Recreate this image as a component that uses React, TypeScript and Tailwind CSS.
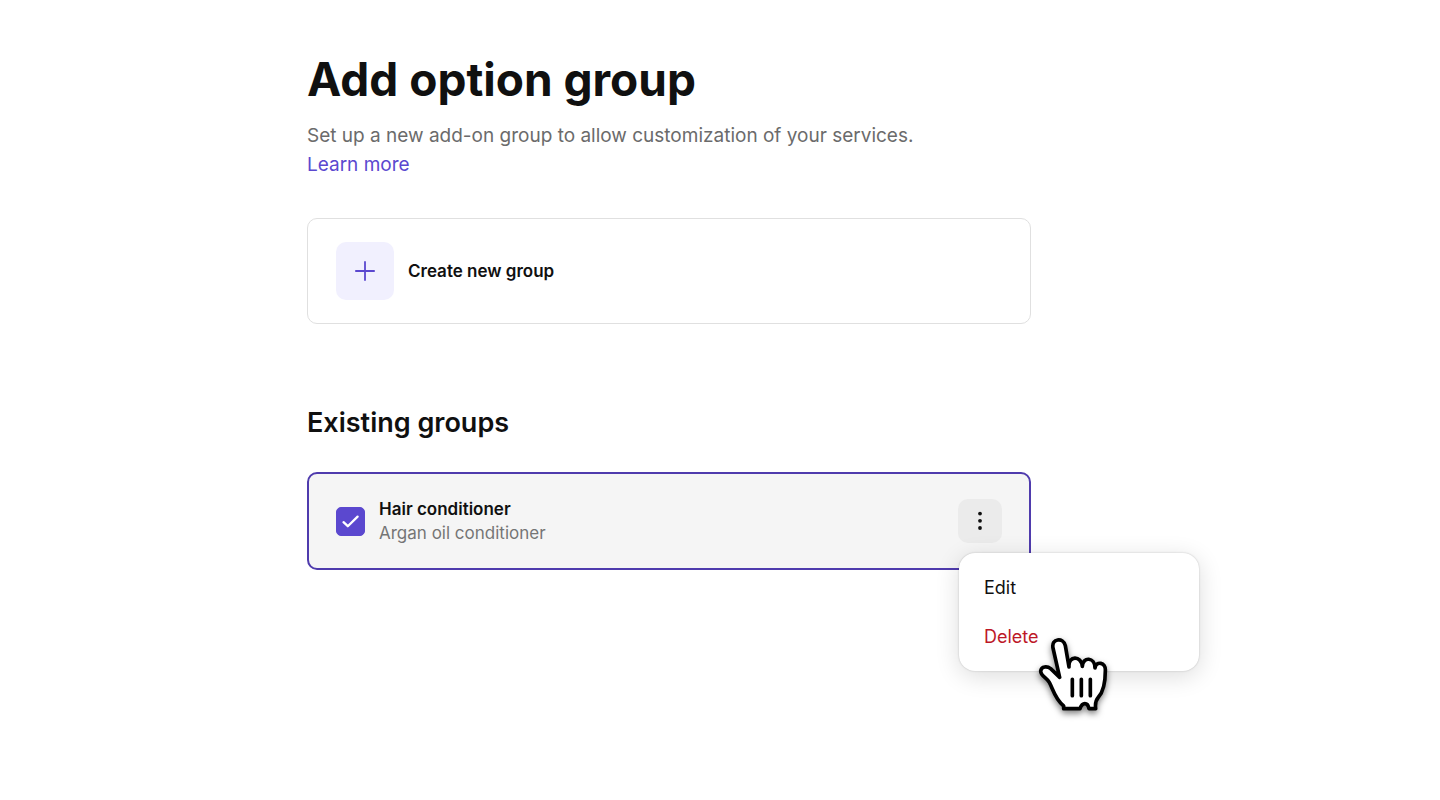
import { useState } from "react";

function PlusIcon() {
  return (
    <svg viewBox="0 0 20 20" className="size-5" fill="none" stroke="currentColor" strokeWidth="1.8" strokeLinecap="round" aria-hidden="true">
      <path d="M10 .9v18.2M.9 10h18.2" />
    </svg>
  );
}

function DotsIcon() {
  return (
    <svg viewBox="0 0 20 20" className="size-5" fill="currentColor" aria-hidden="true">
      <circle cx="10" cy="2.6" r="1.9" />
      <circle cx="10" cy="9.8" r="1.9" />
      <circle cx="10" cy="17" r="1.9" />
    </svg>
  );
}

function PointerHand() {
  return (
    <svg
      viewBox="0 0 330 330"
      className="pointer-events-none absolute top-[67px] left-[61px] size-[110px] drop-shadow-[0_3px_3px_rgba(0,0,0,0.5)]"
      fill="none"
      stroke="#000"
      strokeWidth="11"
      strokeLinecap="round"
      strokeLinejoin="round"
      aria-hidden="true"
    >
      <path
        fill="#fff"
        d="M131 266V258C104 236 99 207 88 187C80 173 62 168 62 153C64 138 82 138 92 146L119 172L99 84C93 55 130 51 136 77L147 141C144 106 184 106 187 139C188 109 225 111 225 144C228 122 258 126 256 152C256 192 250 215 235 232C226 242 225 250 227 266H207C203 246 187 246 180 266Z"
      />
      <path d="M157 178V227M184 178V227M211 178V227" />
    </svg>
  );
}

function CreateGroupCard() {
  return (
    <button type="button" className="mt-[39px] flex w-full items-center gap-3.5 rounded-[10px] border border-[#e0e0e0] px-7 py-[23px] text-left">
      <span className="flex size-[58px] items-center justify-center rounded-[10px] bg-[#f1f0fe] text-[#5b48cf]">
        <PlusIcon />
      </span>
      <span className="text-[17px] leading-6 font-semibold">Create new group</span>
    </button>
  );
}

function ActionMenu() {
  return (
    <div className="relative">
      <button type="button" aria-label="Group actions" className="flex size-11 items-center justify-center rounded-[10px] bg-[#ebebeb]">
        <DotsIcon />
      </button>
      <div className="absolute top-full left-px z-10 mt-2.5 w-60 rounded-2xl bg-white py-2.5 shadow-[0_0_2px_rgba(0,0,0,0.22),0_5px_24px_rgba(0,0,0,0.14)]">
        <button type="button" className="block w-full px-[25px] py-3 text-left text-lg leading-[25px]">
          Edit
        </button>
        <button type="button" className="block w-full px-[25px] py-3 text-left text-lg leading-[25px] text-[#bd1827]">
          Delete
        </button>
        <PointerHand />
      </div>
    </div>
  );
}

function GroupRow() {
  const [checked, setChecked] = useState(true);
  return (
    <div className="flex items-center rounded-[10px] border-2 border-[#4f3bad] bg-[#f5f5f5] px-[27px] py-[25px]">
      <label className="flex flex-1 items-center gap-3.5">
        <span className="grid size-[29px] shrink-0 place-items-center">
          <input
            type="checkbox"
            checked={checked}
            onChange={(e) => setChecked(e.target.checked)}
            className="peer col-start-1 row-start-1 size-full appearance-none rounded-[5px] border border-[#5b48cf] checked:bg-[#5b48cf]"
          />
          <svg
            viewBox="0 0 29 29"
            className="pointer-events-none invisible col-start-1 row-start-1 size-full text-white peer-checked:visible"
            fill="none"
            stroke="currentColor"
            strokeWidth="2.3"
            strokeLinecap="round"
            strokeLinejoin="round"
            aria-hidden="true"
          >
            <path d="M7.5 15.2l4.3 4L21.6 9.6" />
          </svg>
        </span>
        <span className="-my-1 flex flex-col">
          <span className="text-[17px] leading-6 font-semibold">Hair conditioner</span>
          <span className="text-[17px] leading-6 text-[#757575]">Argan oil conditioner</span>
        </span>
      </label>
      <ActionMenu />
    </div>
  );
}

export default function App() {
  return (
    <main className="min-h-screen bg-white pt-[51px] pr-6 pb-12 pl-[307px] font-['Inter',sans-serif] text-[#101010]">
      <div className="w-full max-w-[724px]">
        <h1 className="text-[46px] leading-14 font-bold">Add option group</h1>
        <p className="mt-[14px] text-[19px] leading-[29px] text-[#6b6b6b]">
          Set up a new add-on group to allow customization of your services.
          <br />
          <a href="#learn-more" className="text-[#5b48cf]">
            Learn more
          </a>
        </p>
        <CreateGroupCard />
        <h2 className="mt-[81px] mb-[31px] text-[27px] leading-9 font-semibold">Existing groups</h2>
        <GroupRow />
      </div>
    </main>
  );
}
